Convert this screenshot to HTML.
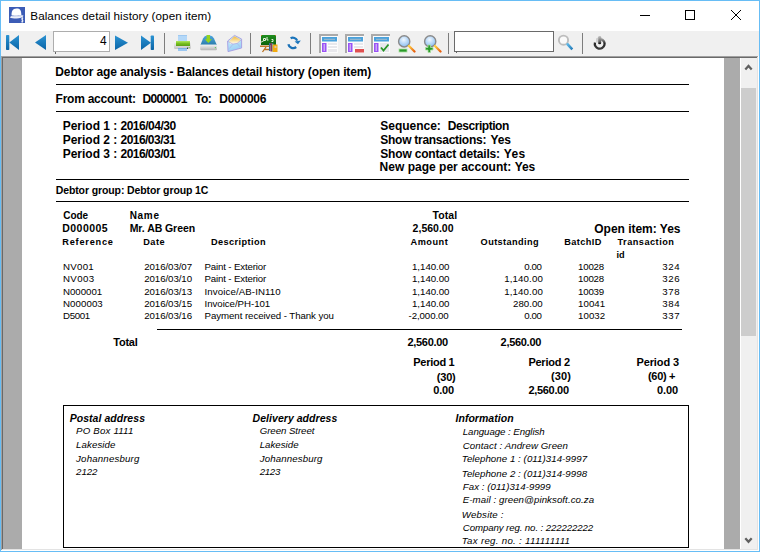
<!DOCTYPE html>
<html><head><meta charset="utf-8"><style>
html,body{margin:0;padding:0;}
body{width:760px;height:552px;overflow:hidden;position:relative;background:#fff;font-family:"Liberation Sans",sans-serif;color:#000;}
.a{position:absolute;}
.t{position:absolute;white-space:pre;color:#000;}
</style></head><body>
<!-- window frame -->
<div class="a" style="left:0;top:0;width:760px;height:1px;background:#67bdf5"></div>
<div class="a" style="left:0;top:0;width:1px;height:552px;background:#67bdf5"></div>
<div class="a" style="left:759px;top:0;width:1px;height:552px;background:#67bdf5"></div>
<div class="a" style="left:0;top:551px;width:760px;height:1px;background:#67bdf5"></div>
<!-- toolbar -->
<div class="a" style="left:1px;top:31px;width:758px;height:25px;background:#f0f0f0"></div>
<!-- content sunken border -->
<div class="a" style="left:1px;top:56px;width:758px;height:495px;background:#fff"></div>
<div class="a" style="left:1px;top:56px;width:757px;height:1px;background:#a0a0a0"></div>
<div class="a" style="left:1px;top:56px;width:1px;height:494px;background:#a0a0a0"></div>
<div class="a" style="left:2px;top:57px;width:755px;height:1px;background:#696969"></div>
<div class="a" style="left:2px;top:57px;width:1px;height:492px;background:#696969"></div>
<div class="a" style="left:2px;top:549px;width:756px;height:1px;background:#e3e3e3"></div>
<div class="a" style="left:757px;top:57px;width:1px;height:493px;background:#e3e3e3"></div>
<!-- gray workspace -->
<div class="a" style="left:3px;top:58px;width:737px;height:491px;background:#ababab"></div>
<!-- page -->
<div class="a" style="left:22px;top:58px;width:702px;height:491px;background:#fff"></div>
<!-- scrollbar -->
<div class="a" style="left:740px;top:58px;width:17px;height:491px;background:#f0f0f0"></div>
<div class="a" style="left:740px;top:58px;width:1px;height:491px;background:#fff"></div>
<div class="a" style="left:741px;top:88px;width:15px;height:248px;background:#cdcdcd"></div>
<svg class="a" style="left:741px;top:58px" width="16" height="17" viewBox="0 0 16 17"><path d="M4.3 11.6 L7.5 8 L10.7 11.6" fill="none" stroke="#606060" stroke-width="2.2"/></svg>
<svg class="a" style="left:741px;top:532px" width="16" height="17" viewBox="0 0 16 17"><path d="M4.3 6.2 L7.5 9.8 L10.7 6.2" fill="none" stroke="#606060" stroke-width="2.2"/></svg>
<!-- report lines -->
<div class="a" style="left:56px;top:84px;width:633px;height:1px;background:#000"></div>
<div class="a" style="left:56px;top:111px;width:633px;height:1px;background:#000"></div>
<div class="a" style="left:56px;top:179px;width:633px;height:1px;background:#000"></div>
<div class="a" style="left:56px;top:201px;width:633px;height:1px;background:#000"></div>
<div class="a" style="left:157px;top:329px;width:525px;height:1px;background:#000"></div>
<div class="a" style="left:63px;top:405px;width:624px;height:141px;border:1px solid #000"></div>
<!-- title icon -->
<svg class="a" style="left:9px;top:7px" width="16" height="16" viewBox="0 0 16 16">
<rect x="0" y="0" width="16" height="16" fill="#3c5cb6"/>
<path d="M2.6 8.5 C2.4 4.5 3.5 1.8 7.5 1.6 C11 1.5 12 3.5 12.2 6 L12.4 8.2 Z" fill="#fff"/>
<path d="M0.8 10.2 C2.5 8.6 6 8.2 9 8.4 C11.5 8.5 13 8 14.6 8.8 C13.5 10.5 11 11.6 7.5 11.6 C4.5 11.6 2.2 11.3 0.8 10.2Z" fill="#eef0f8"/>
<path d="M3 9.6 C6 9 9 9.4 12 9.2" stroke="#c8d0ec" stroke-width="0.8" fill="none"/>
<path d="M14.2 11.2 C12.5 10.8 12.3 12.6 13.4 13 C14.6 13.4 14.2 15.2 12.4 14.8 M13.3 10.2 L13.3 15.6" stroke="#fff" stroke-width="0.9" fill="none"/>
</svg>
<!-- title bar controls -->
<div class="a" style="left:640px;top:15px;width:10px;height:1px;background:#000"></div>
<div class="a" style="left:685px;top:10px;width:8px;height:8px;border:1px solid #000"></div>
<svg class="a" style="left:730px;top:9px" width="12" height="12" viewBox="0 0 12 12"><path d="M1 1 L11 11 M11 1 L1 11" stroke="#000" stroke-width="1" fill="none"/></svg>
<!-- toolbar: nav -->
<svg class="a" style="left:0;top:31px" width="170" height="25" viewBox="0 0 170 25">
<defs><linearGradient id="nb" x1="0" y1="0" x2="0" y2="1"><stop offset="0" stop-color="#2b93d3"/><stop offset="1" stop-color="#0a64a6"/></linearGradient></defs>
<rect x="6" y="4" width="3.3" height="15" rx="0.8" fill="url(#nb)"/>
<path d="M19 4 L19 19 L9.3 11.5Z" fill="url(#nb)"/>
<path d="M46 4 L46 19 L35 11.5Z" fill="url(#nb)"/>
<path d="M115 4.5 L115 19 L128 11.75Z" fill="url(#nb)"/>
<path d="M141 4.5 L141 19 L151 11.75Z" fill="url(#nb)"/>
<rect x="150.7" y="4.5" width="3.3" height="14.5" rx="0.8" fill="url(#nb)"/>
<rect x="53.5" y="0.5" width="56" height="20" fill="#fff" stroke="#adadad"/>
<rect x="55" y="21" width="1" height="2" fill="#666"/>
<rect x="164" y="2" width="1" height="21" fill="#7d7d7d"/>
</svg>
<!-- separators -->
<div class="a" style="left:250px;top:33px;width:1px;height:21px;background:#7d7d7d"></div>
<div class="a" style="left:310px;top:33px;width:1px;height:21px;background:#7d7d7d"></div>
<div class="a" style="left:448px;top:33px;width:1px;height:21px;background:#7d7d7d"></div>
<div class="a" style="left:582px;top:33px;width:1px;height:21px;background:#7d7d7d"></div>
<!-- search box -->
<div class="a" style="left:454px;top:31px;width:98px;height:19px;background:#fff;border:1px solid #6a6a6a"></div>
<div class="a" style="left:456px;top:51px;width:1px;height:2px;background:#666"></div>
<!-- printer -->
<svg class="a" style="left:174px;top:34px" width="17" height="17" viewBox="0 0 17 17">
<defs><linearGradient id="pg" x1="0" y1="0" x2="0" y2="1"><stop offset="0" stop-color="#b0e860"/><stop offset="0.5" stop-color="#78c020"/><stop offset="1" stop-color="#5a9e14"/></linearGradient>
<linearGradient id="pb" x1="0" y1="0" x2="0" y2="1"><stop offset="0" stop-color="#fafafa"/><stop offset="1" stop-color="#c4c4c4"/></linearGradient></defs>
<rect x="0" y="7" width="17" height="8" rx="1.2" fill="url(#pb)"/>
<rect x="4" y="1" width="9" height="7" fill="#b4d8f8"/>
<rect x="4" y="1" width="9" height="1" fill="#9ec8f0"/>
<rect x="2" y="7" width="14" height="5" fill="url(#pg)"/>
<rect x="4" y="14" width="9" height="3" fill="#9cc8f2"/>
<rect x="4" y="14" width="9" height="1" fill="#7aaee0"/>
<rect x="13" y="13.5" width="1" height="1.5" fill="#444"/>
<rect x="14.5" y="13" width="1.5" height="1" fill="#8ccc60"/>
</svg>
<!-- drive download -->
<svg class="a" style="left:200px;top:34px" width="17" height="17" viewBox="0 0 17 17">
<defs><linearGradient id="dg" x1="0" y1="0" x2="0" y2="1"><stop offset="0" stop-color="#4ea6dc"/><stop offset="1" stop-color="#2a7cac"/></linearGradient>
<linearGradient id="dg2" x1="0" y1="0" x2="0" y2="1"><stop offset="0" stop-color="#f4f4f4"/><stop offset="1" stop-color="#b4b4b4"/></linearGradient></defs>
<path d="M0.5 11 L3 4.5 Q4.5 1.6 7 1.6 L10 1.6 Q12.5 1.6 14 4.5 L16.8 11 Z" fill="url(#dg)"/>
<rect x="0.2" y="10.7" width="16.8" height="5.5" rx="1.2" fill="url(#dg2)"/>
<rect x="0.2" y="10.7" width="16.8" height="0.8" fill="#e8ecee"/>
<rect x="14.8" y="13" width="1.2" height="1.2" fill="#6c6"/>
<path d="M6.6 1 L10 1 L10 5.2 L12 5.2 L8.3 8.9 L4.8 5.2 L6.6 5.2Z" fill="#94d41c"/>
</svg>
<!-- envelope -->
<svg class="a" style="left:224px;top:32px" width="22" height="22" viewBox="0 0 22 22">
<defs><linearGradient id="eb" x1="0" y1="0" x2="0.3" y2="1"><stop offset="0" stop-color="#d4f6fa"/><stop offset="1" stop-color="#9ccff6"/></linearGradient>
<linearGradient id="ef" x1="0" y1="0" x2="0" y2="1"><stop offset="0" stop-color="#f4b840"/><stop offset="0.55" stop-color="#f8e0a0"/><stop offset="1" stop-color="#fffdf6"/></linearGradient></defs>
<path d="M3.6 9 L10.5 3.4 L17.6 7 L17.6 16 L4 19.6 Z" fill="url(#eb)" stroke="#a49ce2" stroke-width="0.9"/>
<path d="M5 9.2 L10.5 4.3 L16.4 7.4 L15.4 10.6 L11 11.6 L6.2 12 Z" fill="url(#ef)"/>
<path d="M4 9.4 L9 12.2 L13.2 11.4 L17.4 7.6" fill="none" stroke="#b8a8e0" stroke-width="0.8"/>
<path d="M9 12.2 L5.5 16.5 M13.2 11.4 L16 14.8" fill="none" stroke="#a8b8ec" stroke-width="0.8"/>
</svg>
<!-- chalkboard -->
<svg class="a" style="left:257px;top:32px" width="24" height="22" viewBox="0 0 24 22">
<defs><linearGradient id="cb" x1="0" y1="0" x2="0" y2="1"><stop offset="0" stop-color="#1f8e1f"/><stop offset="1" stop-color="#0b620b"/></linearGradient></defs>
<rect x="4" y="3" width="15" height="10" fill="url(#cb)"/>
<rect x="4" y="3" width="1" height="1" fill="#c07a2a"/><rect x="18" y="3" width="1" height="1" fill="#c07a2a"/>
<path d="M6.5 6.5 L8.5 6.5 L8.5 8.5 L6.5 8.5Z M10 5 L10 8 L11.5 8 M14.5 7.5 L16 7.5 L16 9.5 L14.5 9.5" stroke="#e8f4e0" stroke-width="1" fill="none"/>
<path d="M3.5 10.5 L7 8.5" stroke="#e0e8d8" stroke-width="1"/>
<rect x="3" y="13.5" width="10" height="1.5" fill="#c07828"/>
<path d="M5.5 20 L9 15 M7 17.5 L12 17.5" stroke="#b8701e" stroke-width="1.3" fill="none"/>
<rect x="12" y="11" width="1.5" height="8" fill="#3a6aa0"/>
<rect x="13.5" y="11" width="1.5" height="8.5" fill="#8a3a5a"/>
<rect x="15" y="11.5" width="1.5" height="8" fill="#5aa0d0"/>
<rect x="15.5" y="12.5" width="5" height="7.5" fill="#f2aa10"/>
<rect x="17.5" y="14" width="2" height="2" fill="#d8c8a0"/>
</svg>
<!-- refresh -->
<svg class="a" style="left:282px;top:33px" width="22" height="20" viewBox="0 0 22 20">
<path d="M8.6 5.2 A4.8 4.8 0 0 1 15.2 7.6" fill="none" stroke="#1a74bb" stroke-width="2.3"/>
<path d="M12.6 8.4 L18.8 7.6 L16 11.2Z" fill="#1a74bb"/>
<path d="M6.4 11.2 A4.8 4.8 0 0 0 14.2 14" fill="none" stroke="#1a70b6" stroke-width="2.3"/>
</svg>
<!-- report icons -->
<svg class="a" style="left:319px;top:34px" width="72" height="19" viewBox="0 0 72 19">
<g id="rep">
<rect x="0" y="0" width="19" height="2" fill="#aaaaaa"/>
<rect x="0" y="0" width="2" height="19" fill="#aaaaaa"/>
<rect x="2" y="2" width="17" height="17" fill="#fbfbfb"/>
<rect x="3" y="3" width="15" height="4.5" fill="#4aa2dc"/>
<rect x="5" y="4.8" width="11" height="1" fill="#a6bccc"/>
<rect x="3" y="9" width="4.5" height="9" fill="#9a52f6"/>
<rect x="4.5" y="10" width="1.5" height="7" fill="#c8a8f4"/>
<rect x="9" y="9" width="9" height="9" fill="#e8e8ec"/>
<rect x="9" y="11" width="9" height="1" fill="#fff"/><rect x="9" y="14" width="9" height="1" fill="#fff"/>
</g>
</svg>
<svg class="a" style="left:345px;top:34px" width="19" height="19" viewBox="0 0 19 19">
<rect x="0" y="0" width="19" height="2" fill="#aaaaaa"/>
<rect x="0" y="0" width="2" height="19" fill="#aaaaaa"/>
<rect x="2" y="2" width="17" height="17" fill="#fbfbfb"/>
<rect x="3" y="3" width="15" height="4.5" fill="#4aa2dc"/>
<rect x="5" y="4.8" width="11" height="1" fill="#a6bccc"/>
<rect x="3" y="9" width="4.5" height="9" fill="#9a52f6"/>
<rect x="4.5" y="10" width="1.5" height="7" fill="#c8a8f4"/>
<rect x="9" y="9" width="9" height="5" fill="#e8e8ec"/>
<rect x="9" y="11" width="9" height="1" fill="#fff"/>
<rect x="10" y="15" width="9" height="3.5" fill="#e05050"/>
</svg>
<svg class="a" style="left:371px;top:34px" width="19" height="19" viewBox="0 0 19 19">
<rect x="0" y="0" width="19" height="2" fill="#aaaaaa"/>
<rect x="0" y="0" width="2" height="19" fill="#aaaaaa"/>
<rect x="2" y="2" width="17" height="17" fill="#fbfbfb"/>
<rect x="3" y="3" width="15" height="4.5" fill="#4aa2dc"/>
<rect x="5" y="4.8" width="11" height="1" fill="#a6bccc"/>
<rect x="3" y="9" width="4.5" height="9" fill="#9a52f6"/>
<rect x="4.5" y="10" width="1.5" height="7" fill="#c8a8f4"/>
<rect x="9" y="9" width="9" height="9" fill="#e8e8ec"/>
<path d="M10 13.5 L12.5 16.5 L17.5 10.5" fill="none" stroke="#289628" stroke-width="1.8"/>
</svg>
<!-- zoom out / in -->
<svg class="a" style="left:396px;top:34px" width="62" height="19" viewBox="0 0 62 19">
<defs><radialGradient id="lg" cx="0.45" cy="0.35" r="0.7"><stop offset="0" stop-color="#f0f8ff"/><stop offset="1" stop-color="#80b8f0"/></radialGradient>
<linearGradient id="hg" x1="0" y1="0" x2="1" y2="1"><stop offset="0" stop-color="#ffd040"/><stop offset="1" stop-color="#e86010"/></linearGradient></defs>
<circle cx="8.2" cy="7.4" r="5.6" fill="url(#lg)" stroke="#8a8a8a" stroke-width="1.4"/>
<path d="M13 12 L18.5 17.5" stroke="url(#hg)" stroke-width="2.3" stroke-linecap="round"/>
<rect x="3" y="15" width="8" height="3" fill="#2a9a2a" stroke="#a8e0a0" stroke-width="0.8"/>
<circle cx="34.2" cy="7.4" r="5.6" fill="url(#lg)" stroke="#8a8a8a" stroke-width="1.4"/>
<path d="M39 12 L44.5 17.5" stroke="url(#hg)" stroke-width="2.3" stroke-linecap="round"/>
<path d="M32 11 L32 13.5 L29.5 13.5 L29.5 16 L32 16 L32 18.5 L34.5 18.5 L34.5 16 L37 16 L37 13.5 L34.5 13.5 L34.5 11Z" fill="#2a9a2a" stroke="#a8e0a0" stroke-width="0.8"/>
</svg>
<!-- search icon -->
<svg class="a" style="left:557px;top:34px" width="18" height="18" viewBox="0 0 18 18">
<defs><linearGradient id="sh" x1="0" y1="0" x2="1" y2="1"><stop offset="0" stop-color="#6ac4f0"/><stop offset="1" stop-color="#1a72b2"/></linearGradient></defs>
<circle cx="6.5" cy="6.2" r="4.6" fill="#fafafa" stroke="#bdbdbd" stroke-width="1.9"/>
<path d="M9.6 9.4 L11 8.8 L16.2 14.4 L14.4 16.2 L9.2 10.8Z" fill="url(#sh)"/>
</svg>
<!-- power -->
<svg class="a" style="left:588px;top:32px" width="24" height="22" viewBox="0 0 24 22">
<defs><linearGradient id="pw" x1="0" y1="0" x2="0" y2="1"><stop offset="0" stop-color="#c4c4c4"/><stop offset="1" stop-color="#3a3a3a"/></linearGradient>
<linearGradient id="pr" x1="0" y1="0" x2="0" y2="1"><stop offset="0" stop-color="#9a9a9a"/><stop offset="0.45" stop-color="#2a2a2a"/><stop offset="1" stop-color="#3a3a3a"/></linearGradient></defs>
<path d="M12.97 7.07 A4.9 4.9 0 1 1 6.97 10.53" fill="none" stroke="url(#pr)" stroke-width="2.3"/>
<path d="M8.2 6.5 L9.8 5.5 L9.8 10.5 L8.2 10.5Z" fill="#c8c8c8"/>
<rect x="10.2" y="4" width="3" height="8.2" rx="1.3" fill="url(#pw)"/>
<rect x="10.6" y="10.6" width="2.2" height="1.4" fill="#222"/>
</svg>

<div class="t" style="left:30.30px;top:10px;font-size:11.7px;line-height:11.7px;letter-spacing:0.047px;">Balances detail history (open item)</div>
<div class="t" style="left:100.10px;top:35px;font-size:12px;line-height:12px;">4</div>
<div class="t" style="left:55.30px;top:66px;font-size:12px;line-height:12px;font-weight:700;letter-spacing:-0.120px;">Debtor age analysis - Balances detail history (open item)</div>
<div class="t" style="left:55.60px;top:93px;font-size:12px;line-height:12px;font-weight:700;letter-spacing:-0.250px;">From account:</div>
<div class="t" style="left:142.40px;top:93px;font-size:12px;line-height:12px;font-weight:700;letter-spacing:-0.633px;">D000001</div>
<div class="t" style="left:195.00px;top:93px;font-size:12px;line-height:12px;font-weight:700;letter-spacing:-0.500px;">To:</div>
<div class="t" style="left:219.30px;top:93px;font-size:12px;line-height:12px;font-weight:700;letter-spacing:-0.267px;">D000006</div>
<div class="t" style="left:62.70px;top:120px;font-size:12px;line-height:12px;font-weight:700;letter-spacing:-0.011px;">Period 1 :</div>
<div class="t" style="left:120.50px;top:120px;font-size:12px;line-height:12px;font-weight:700;letter-spacing:-0.500px;">2016/04/30</div>
<div class="t" style="left:62.70px;top:134px;font-size:12px;line-height:12px;font-weight:700;letter-spacing:-0.011px;">Period 2 :</div>
<div class="t" style="left:120.50px;top:134px;font-size:12px;line-height:12px;font-weight:700;letter-spacing:-0.533px;">2016/03/31</div>
<div class="t" style="left:62.70px;top:148px;font-size:12px;line-height:12px;font-weight:700;letter-spacing:-0.011px;">Period 3 :</div>
<div class="t" style="left:120.50px;top:148px;font-size:12px;line-height:12px;font-weight:700;letter-spacing:-0.533px;">2016/03/01</div>
<div class="t" style="left:380.30px;top:120px;font-size:12px;line-height:12px;font-weight:700;letter-spacing:-0.025px;">Sequence:</div>
<div class="t" style="left:447.80px;top:120px;font-size:12px;line-height:12px;font-weight:700;letter-spacing:-0.450px;">Description</div>
<div class="t" style="left:380.30px;top:134px;font-size:12px;line-height:12px;font-weight:700;letter-spacing:-0.271px;">Show transactions:</div>
<div class="t" style="left:490.50px;top:134px;font-size:12px;line-height:12px;font-weight:700;letter-spacing:-0.100px;">Yes</div>
<div class="t" style="left:380.30px;top:148px;font-size:12px;line-height:12px;font-weight:700;letter-spacing:-0.180px;">Show contact details:</div>
<div class="t" style="left:503.80px;top:148px;font-size:12px;line-height:12px;font-weight:700;letter-spacing:0.300px;">Yes</div>
<div class="t" style="left:379.60px;top:161px;font-size:12px;line-height:12px;font-weight:700;letter-spacing:0.015px;">New page per account:</div>
<div class="t" style="left:514.70px;top:161px;font-size:12px;line-height:12px;font-weight:700;letter-spacing:-0.100px;">Yes</div>
<div class="t" style="left:55.70px;top:185px;font-size:10.5px;line-height:10.5px;font-weight:700;letter-spacing:-0.107px;">Debtor group: Debtor group 1C</div>
<div class="t" style="left:63.30px;top:211px;font-size:10px;line-height:10px;font-weight:700;letter-spacing:-0.100px;">Code</div>
<div class="t" style="left:129.70px;top:211px;font-size:10px;line-height:10px;font-weight:700;letter-spacing:0.700px;">Name</div>
<div class="t" style="left:432.60px;top:210px;font-size:10.5px;line-height:10.5px;font-weight:700;letter-spacing:0.050px;">Total</div>
<div class="t" style="left:62.30px;top:223px;font-size:10.5px;line-height:10.5px;font-weight:700;letter-spacing:0.450px;">D000005</div>
<div class="t" style="left:129.70px;top:223px;font-size:10.5px;line-height:10.5px;font-weight:700;letter-spacing:-0.064px;">Mr. AB Green</div>
<div class="t" style="left:412.60px;top:223px;font-size:10.5px;line-height:10.5px;font-weight:700;letter-spacing:0.014px;">2,560.00</div>
<div class="t" style="left:594.30px;top:223px;font-size:12px;line-height:12px;font-weight:700;letter-spacing:-0.023px;">Open item: Yes</div>
<div class="t" style="left:62.30px;top:238px;font-size:9.2px;line-height:9.2px;font-weight:700;letter-spacing:0.775px;">Reference</div>
<div class="t" style="left:143.30px;top:238px;font-size:9.2px;line-height:9.2px;font-weight:700;letter-spacing:0.433px;">Date</div>
<div class="t" style="left:210.90px;top:238px;font-size:9.2px;line-height:9.2px;font-weight:700;letter-spacing:0.410px;">Description</div>
<div class="t" style="left:410.50px;top:238px;font-size:9.2px;line-height:9.2px;font-weight:700;letter-spacing:0.500px;">Amount</div>
<div class="t" style="left:480.60px;top:238px;font-size:9.2px;line-height:9.2px;font-weight:700;letter-spacing:0.390px;">Outstanding</div>
<div class="t" style="left:564.30px;top:238px;font-size:9.2px;line-height:9.2px;font-weight:700;letter-spacing:0.383px;">BatchID</div>
<div class="t" style="left:617.50px;top:238px;font-size:9.2px;line-height:9.2px;font-weight:700;letter-spacing:0.480px;">Transaction</div>
<div class="t" style="left:616.50px;top:251px;font-size:9.2px;line-height:9.2px;font-weight:700;">id</div>
<div class="t" style="left:63.00px;top:262px;font-size:9.7px;line-height:9.7px;letter-spacing:0.275px;">NV001</div>
<div class="t" style="left:144.20px;top:262px;font-size:9.7px;line-height:9.7px;letter-spacing:-0.067px;">2016/03/07</div>
<div class="t" style="left:204.50px;top:262px;font-size:9.7px;line-height:9.7px;letter-spacing:-0.160px;">Paint - Exterior</div>
<div class="t" style="left:412.00px;top:262px;font-size:9.7px;line-height:9.7px;letter-spacing:-0.029px;">1,140.00</div>
<div class="t" style="left:524.20px;top:262px;font-size:9.7px;line-height:9.7px;letter-spacing:-0.367px;">0.00</div>
<div class="t" style="left:578.00px;top:262px;font-size:9.7px;line-height:9.7px;letter-spacing:-0.200px;">10028</div>
<div class="t" style="left:662.20px;top:262px;font-size:9.7px;line-height:9.7px;letter-spacing:0.600px;">324</div>
<div class="t" style="left:63.00px;top:274px;font-size:9.7px;line-height:9.7px;letter-spacing:0.375px;">NV003</div>
<div class="t" style="left:144.20px;top:274px;font-size:9.7px;line-height:9.7px;letter-spacing:-0.067px;">2016/03/10</div>
<div class="t" style="left:204.50px;top:274px;font-size:9.7px;line-height:9.7px;letter-spacing:-0.160px;">Paint - Exterior</div>
<div class="t" style="left:412.00px;top:274px;font-size:9.7px;line-height:9.7px;letter-spacing:-0.029px;">1,140.00</div>
<div class="t" style="left:504.30px;top:274px;font-size:9.7px;line-height:9.7px;letter-spacing:0.114px;">1,140.00</div>
<div class="t" style="left:578.00px;top:274px;font-size:9.7px;line-height:9.7px;letter-spacing:-0.200px;">10028</div>
<div class="t" style="left:662.20px;top:274px;font-size:9.7px;line-height:9.7px;letter-spacing:0.600px;">326</div>
<div class="t" style="left:63.00px;top:287px;font-size:9.7px;line-height:9.7px;letter-spacing:-0.033px;">N000001</div>
<div class="t" style="left:144.20px;top:287px;font-size:9.7px;line-height:9.7px;letter-spacing:-0.067px;">2016/03/13</div>
<div class="t" style="left:204.50px;top:287px;font-size:9.7px;line-height:9.7px;letter-spacing:0.100px;">Invoice/AB-IN110</div>
<div class="t" style="left:412.00px;top:287px;font-size:9.7px;line-height:9.7px;letter-spacing:-0.029px;">1,140.00</div>
<div class="t" style="left:504.30px;top:287px;font-size:9.7px;line-height:9.7px;letter-spacing:0.114px;">1,140.00</div>
<div class="t" style="left:578.00px;top:287px;font-size:9.7px;line-height:9.7px;letter-spacing:-0.200px;">10039</div>
<div class="t" style="left:662.20px;top:287px;font-size:9.7px;line-height:9.7px;letter-spacing:0.600px;">378</div>
<div class="t" style="left:63.00px;top:299px;font-size:9.7px;line-height:9.7px;letter-spacing:0.067px;">N000003</div>
<div class="t" style="left:144.20px;top:299px;font-size:9.7px;line-height:9.7px;letter-spacing:-0.067px;">2016/03/15</div>
<div class="t" style="left:204.50px;top:299px;font-size:9.7px;line-height:9.7px;letter-spacing:-0.038px;">Invoice/PH-101</div>
<div class="t" style="left:412.00px;top:299px;font-size:9.7px;line-height:9.7px;letter-spacing:-0.029px;">1,140.00</div>
<div class="t" style="left:513.00px;top:299px;font-size:9.7px;line-height:9.7px;letter-spacing:0.020px;">280.00</div>
<div class="t" style="left:578.00px;top:299px;font-size:9.7px;line-height:9.7px;letter-spacing:0.050px;">10041</div>
<div class="t" style="left:662.20px;top:299px;font-size:9.7px;line-height:9.7px;letter-spacing:0.600px;">384</div>
<div class="t" style="left:63.00px;top:311px;font-size:9.7px;line-height:9.7px;letter-spacing:-0.350px;">D5001</div>
<div class="t" style="left:144.20px;top:311px;font-size:9.7px;line-height:9.7px;letter-spacing:-0.067px;">2016/03/16</div>
<div class="t" style="left:204.50px;top:311px;font-size:9.7px;line-height:9.7px;letter-spacing:-0.063px;">Payment received - Thank you</div>
<div class="t" style="left:408.50px;top:311px;font-size:9.7px;line-height:9.7px;letter-spacing:-0.087px;">-2,000.00</div>
<div class="t" style="left:524.20px;top:311px;font-size:9.7px;line-height:9.7px;letter-spacing:-0.367px;">0.00</div>
<div class="t" style="left:578.00px;top:311px;font-size:9.7px;line-height:9.7px;letter-spacing:0.050px;">10032</div>
<div class="t" style="left:662.20px;top:311px;font-size:9.7px;line-height:9.7px;letter-spacing:0.600px;">337</div>
<div class="t" style="left:113.20px;top:337px;font-size:11px;line-height:11px;font-weight:700;letter-spacing:-0.200px;">Total</div>
<div class="t" style="left:407.40px;top:337px;font-size:11px;line-height:11px;font-weight:700;letter-spacing:-0.286px;">2,560.00</div>
<div class="t" style="left:500.60px;top:337px;font-size:11px;line-height:11px;font-weight:700;letter-spacing:-0.300px;">2,560.00</div>
<div class="t" style="left:413.30px;top:357px;font-size:11px;line-height:11px;font-weight:700;letter-spacing:-0.286px;">Period 1</div>
<div class="t" style="left:436.80px;top:372px;font-size:11px;line-height:11px;font-weight:700;letter-spacing:-0.200px;">(30)</div>
<div class="t" style="left:433.30px;top:385px;font-size:11px;line-height:11px;font-weight:700;letter-spacing:-0.200px;">0.00</div>
<div class="t" style="left:528.40px;top:357px;font-size:11px;line-height:11px;font-weight:700;letter-spacing:-0.243px;">Period 2</div>
<div class="t" style="left:550.90px;top:371px;font-size:11px;line-height:11px;font-weight:700;letter-spacing:0.133px;">(30)</div>
<div class="t" style="left:528.50px;top:385px;font-size:11px;line-height:11px;font-weight:700;letter-spacing:-0.329px;">2,560.00</div>
<div class="t" style="left:636.40px;top:357px;font-size:11px;line-height:11px;font-weight:700;letter-spacing:-0.086px;">Period 3</div>
<div class="t" style="left:648.00px;top:371px;font-size:11px;line-height:11px;font-weight:700;letter-spacing:-0.300px;">(60) +</div>
<div class="t" style="left:656.90px;top:385px;font-size:11px;line-height:11px;font-weight:700;letter-spacing:-0.067px;">0.00</div>
<div class="t" style="left:69.70px;top:413px;font-size:10.5px;line-height:10.5px;font-weight:700;font-style:italic;letter-spacing:0.046px;">Postal address</div>
<div class="t" style="left:76.10px;top:426px;font-size:9.7px;line-height:9.7px;font-style:italic;letter-spacing:0.180px;">PO Box 1111</div>
<div class="t" style="left:76.10px;top:440px;font-size:9.7px;line-height:9.7px;font-style:italic;letter-spacing:0.086px;">Lakeside</div>
<div class="t" style="left:76.10px;top:454px;font-size:9.7px;line-height:9.7px;font-style:italic;letter-spacing:0.173px;">Johannesburg</div>
<div class="t" style="left:76.10px;top:467px;font-size:9.7px;line-height:9.7px;font-style:italic;letter-spacing:-0.067px;">2122</div>
<div class="t" style="left:252.60px;top:413px;font-size:10.5px;line-height:10.5px;font-weight:700;font-style:italic;letter-spacing:0.040px;">Delivery address</div>
<div class="t" style="left:259.70px;top:426px;font-size:9.7px;line-height:9.7px;font-style:italic;letter-spacing:-0.064px;">Green Street</div>
<div class="t" style="left:259.70px;top:440px;font-size:9.7px;line-height:9.7px;font-style:italic;letter-spacing:0.014px;">Lakeside</div>
<div class="t" style="left:259.70px;top:454px;font-size:9.7px;line-height:9.7px;font-style:italic;letter-spacing:0.127px;">Johannesburg</div>
<div class="t" style="left:259.70px;top:467px;font-size:9.7px;line-height:9.7px;font-style:italic;letter-spacing:-0.300px;">2123</div>
<div class="t" style="left:455.50px;top:413px;font-size:10.5px;line-height:10.5px;font-weight:700;font-style:italic;letter-spacing:0.030px;">Information</div>
<div class="t" style="left:462.80px;top:427px;font-size:9.7px;line-height:9.7px;font-style:italic;letter-spacing:-0.065px;">Language : English</div>
<div class="t" style="left:462.80px;top:441px;font-size:9.7px;line-height:9.7px;font-style:italic;letter-spacing:0.076px;">Contact : Andrew Green</div>
<div class="t" style="left:461.80px;top:454px;font-size:9.7px;line-height:9.7px;font-style:italic;letter-spacing:0.054px;">Telephone 1 : (011)314-9997</div>
<div class="t" style="left:461.80px;top:469px;font-size:9.7px;line-height:9.7px;font-style:italic;letter-spacing:0.054px;">Telephone 2 : (011)314-9998</div>
<div class="t" style="left:462.80px;top:482px;font-size:9.7px;line-height:9.7px;font-style:italic;letter-spacing:0.044px;">Fax : (011)314-9999</div>
<div class="t" style="left:462.80px;top:495px;font-size:9.7px;line-height:9.7px;font-style:italic;letter-spacing:0.068px;">E-mail : green@pinksoft.co.za</div>
<div class="t" style="left:461.80px;top:510px;font-size:9.7px;line-height:9.7px;font-style:italic;letter-spacing:0.188px;">Website :</div>
<div class="t" style="left:462.80px;top:523px;font-size:9.7px;line-height:9.7px;font-style:italic;letter-spacing:-0.115px;">Company reg. no. : 222222222</div>
<div class="t" style="left:461.80px;top:536px;font-size:9.7px;line-height:9.7px;font-style:italic;letter-spacing:0.287px;">Tax reg. no. : 111111111</div>
</body></html>
